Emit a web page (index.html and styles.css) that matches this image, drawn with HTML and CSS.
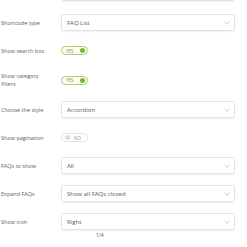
FILE: index.html
```html
<!DOCTYPE html>
<html lang="en">
<head>
    <meta charset="UTF-8">
    <title>FAQ Shortcode Settings</title>
    <link rel="stylesheet" href="styles.css">
</head>
<body>
    <div class="settings">

        <!-- cut off select at the top -->
        <div class="row row-top">
            <span class="label"></span>
            <div class="select"><span></span><span class="chev"></span></div>
        </div>

        <div class="row">
            <span class="label">Shortcode type</span>
            <div class="select"><span>FAQ List</span><span class="chev"></span></div>
        </div>

        <div class="row">
            <span class="label">Show search box</span>
            <div class="toggle on"><span class="txt">YES</span><span class="dot"></span></div>
        </div>

        <div class="row row-tall">
            <span class="label">Show category<br>filters</span>
            <div class="toggle on"><span class="txt">YES</span><span class="dot"></span></div>
        </div>

        <div class="row">
            <span class="label">Choose the style</span>
            <div class="select"><span>Accordion</span><span class="chev"></span></div>
        </div>

        <div class="row">
            <span class="label">Show pagination</span>
            <div class="toggle off"><span class="dot"></span><span class="txt">NO</span></div>
        </div>

        <div class="row">
            <span class="label">FAQs to show</span>
            <div class="select"><span>All</span><span class="chev"></span></div>
        </div>

        <div class="row">
            <span class="label">Expand FAQs</span>
            <div class="select"><span>Show all FAQs closed</span><span class="chev"></span></div>
        </div>

        <div class="row">
            <span class="label">Show icon</span>
            <div class="select"><span>Right</span><span class="chev"></span></div>
        </div>

    </div>

    <div class="pager">1/4</div>
</body>
</html>
```

FILE: styles.css
```css
/* General */
body {
    margin: 0;
    padding: 0;
    background: #fff;
    font-family: "Open Sans", "Liberation Sans", sans-serif;
    color: #444;
    overflow: hidden;
}

.settings {
    display: flex;
    flex-direction: column;
    gap: 11px;
    padding-left: 1px;
}

/* Rows */
.row {
    display: grid;
    grid-template-columns: 60px 174px;
    align-items: center;
    height: 17px;
}

.row-top {
    margin-top: -16px;
    margin-bottom: 2px;
}

.row-tall {
    height: 20px;
}

.label {
    font-size: 5.5px;
    line-height: 8px;
    color: #5e5e5e;
}

/* Select boxes */
.select {
    box-sizing: border-box;
    height: 17px;
    border: 1px solid #e2e2e2;
    border-radius: 2px;
    box-shadow: 0 1px 2px rgba(0, 0, 0, 0.06);
    display: flex;
    align-items: center;
    justify-content: space-between;
    padding: 0 5px 0 5px;
    font-size: 6px;
    color: #5a5a5a;
}

.chev {
    width: 3px;
    height: 3px;
    border-right: 1px solid #d6d6d6;
    border-bottom: 1px solid #d6d6d6;
    transform: rotate(45deg);
    margin-top: -2px;
}

/* Toggles */
.toggle {
    box-sizing: border-box;
    width: 27px;
    height: 9px;
    border-radius: 5px;
    display: flex;
    align-items: center;
    justify-content: space-between;
    padding: 0 2px 0 4px;
    font-size: 4.5px;
}

.toggle.on {
    border: 1px solid #a9cf6f;
    background: #fbfdf1;
    color: #7da23c;
}

.toggle.on .dot {
    background: #7bb63a;
}

.toggle.off {
    border: 1px solid #e4e4e4;
    background: #fff;
    color: #999;
    padding: 0 6px 0 3px;
}

.toggle.off .dot {
    background: #ddd;
}

.dot {
    width: 5px;
    height: 5px;
    border-radius: 50%;
}

.pager {
    margin: 2px 0 0 96px;
    font-size: 5px;
    color: #555;
}
```
